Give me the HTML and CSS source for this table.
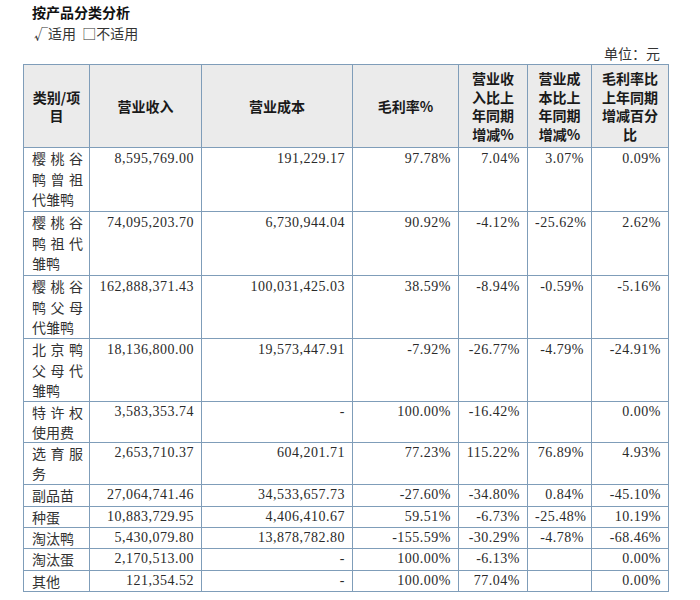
FILE: index.html
```html
<!DOCTYPE html>
<html lang="zh">
<head>
<meta charset="utf-8">
<link rel="stylesheet" href="styles.css">
</head>
<body>
<div class="page">
  <div class="title">按产品分类分析</div>
  <div class="opts">√适用&nbsp;&nbsp;□不适用</div>
  <div class="unit">单位：元</div>
  <table class="tbl">
    <colgroup>
      <col class="c1"><col class="c2"><col class="c3"><col class="c4"><col class="c5"><col class="c6"><col class="c7">
    </colgroup>
    <thead>
      <tr class="hr">
        <th>类别/项目</th>
        <th>营业收入</th>
        <th>营业成本</th>
        <th>毛利率%</th>
        <th>营业收入比上年同期增减%</th>
        <th>营业成本比上年同期增减%</th>
        <th>毛利率比上年同期增减百分比</th>
      </tr>
    </thead>
    <tbody>
      <tr class="h3a"><td class="name">樱桃谷鸭曾祖代雏鸭</td><td class="num">8,595,769.00</td><td class="num">191,229.17</td><td class="num">97.78%</td><td class="num">7.04%</td><td class="num">3.07%</td><td class="num">0.09%</td></tr>
      <tr class="h3a"><td class="name">樱桃谷鸭祖代雏鸭</td><td class="num">74,095,203.70</td><td class="num">6,730,944.04</td><td class="num">90.92%</td><td class="num">-4.12%</td><td class="num">-25.62%</td><td class="num">2.62%</td></tr>
      <tr class="h3b"><td class="name">樱桃谷鸭父母代雏鸭</td><td class="num">162,888,371.43</td><td class="num">100,031,425.03</td><td class="num">38.59%</td><td class="num">-8.94%</td><td class="num">-0.59%</td><td class="num">-5.16%</td></tr>
      <tr class="h3b"><td class="name">北京鸭父母代雏鸭</td><td class="num">18,136,800.00</td><td class="num">19,573,447.91</td><td class="num">-7.92%</td><td class="num">-26.77%</td><td class="num">-4.79%</td><td class="num">-24.91%</td></tr>
      <tr class="h2a"><td class="name">特许权使用费</td><td class="num">3,583,353.74</td><td class="num">-</td><td class="num">100.00%</td><td class="num">-16.42%</td><td class="num"></td><td class="num">0.00%</td></tr>
      <tr class="h2b"><td class="name">选育服务</td><td class="num">2,653,710.37</td><td class="num">604,201.71</td><td class="num">77.23%</td><td class="num">115.22%</td><td class="num">76.89%</td><td class="num">4.93%</td></tr>
      <tr class="h1b"><td class="name">副品苗</td><td class="num">27,064,741.46</td><td class="num">34,533,657.73</td><td class="num">-27.60%</td><td class="num">-34.80%</td><td class="num">0.84%</td><td class="num">-45.10%</td></tr>
      <tr class="h1a"><td class="name">种蛋</td><td class="num">10,883,729.95</td><td class="num">4,406,410.67</td><td class="num">59.51%</td><td class="num">-6.73%</td><td class="num">-25.48%</td><td class="num">10.19%</td></tr>
      <tr class="h1a"><td class="name">淘汰鸭</td><td class="num">5,430,079.80</td><td class="num">13,878,782.80</td><td class="num">-155.59%</td><td class="num">-30.29%</td><td class="num">-4.78%</td><td class="num">-68.46%</td></tr>
      <tr class="h1b"><td class="name">淘汰蛋</td><td class="num">2,170,513.00</td><td class="num">-</td><td class="num">100.00%</td><td class="num">-6.13%</td><td class="num"></td><td class="num">0.00%</td></tr>
      <tr class="h1a"><td class="name">其他</td><td class="num">121,354.52</td><td class="num">-</td><td class="num">100.00%</td><td class="num">77.04%</td><td class="num"></td><td class="num">0.00%</td></tr>
    </tbody>
  </table>
</div>
</body>
</html>
```

FILE: styles.css
```css
html, body {
  margin: 0;
  padding: 0;
  background: #ffffff;
}

.page {
  width: 700px;
  font-family: "Liberation Serif", "Noto Sans CJK SC", serif;
  color: #2a2a2a;
  font-size: 14px;
}

.title {
  font-family: "Noto Sans CJK SC", sans-serif;
  font-weight: bold;
  font-size: 14px;
  line-height: 20px;
  color: #111;
  margin: 2px 0 0 32px;
}

.opts {
  font-family: "Noto Sans CJK SC", sans-serif;
  font-size: 14px;
  line-height: 20px;
  color: #333;
  margin: 1px 0 0 34px;
}

.unit {
  font-family: "Noto Sans CJK SC", sans-serif;
  font-size: 14px;
  line-height: 20px;
  color: #333;
  text-align: right;
  padding-right: 40px;
}

.tbl {
  margin: 1px 0 0 23px;
  border-collapse: collapse;
  table-layout: fixed;
  width: 645px;
}

.c1 { width: 66px; }
.c2 { width: 112px; }
.c3 { width: 151px; }
.c4 { width: 106px; }
.c5 { width: 69px; }
.c6 { width: 64px; }
.c7 { width: 77px; }

.tbl th,
.tbl td {
  border: 1px solid #7f9db9;
  padding: 0 7px;
  box-sizing: border-box;
}

.tbl th {
  background: #ebebeb;
  font-family: "Noto Sans CJK SC", sans-serif;
  font-weight: bold;
  font-size: 14px;
  line-height: 18.5px;
  color: #1a1a1a;
  text-align: center;
  vertical-align: middle;
  height: 83px;
}

.tbl td {
  vertical-align: top;
  line-height: 20px;
  padding-top: 1px;
}

.tbl td.name {
  font-family: "Noto Sans CJK SC", sans-serif;
  text-align: justify;
  padding: 0 6px 0 8px;
  line-height: 20.5px;
  color: #333;
}

.tbl td.num {
  text-align: right;
  letter-spacing: 0.5px;
}

.h1a td, .h1b td, .h2a td, .h2b td { padding-top: 0; }
.h3a td { height: 64px; }
.h3b td { height: 63px; }
.h2a td { height: 41px; }
.h2b td { height: 42px; }
.h1a td { height: 21px; }
.h1b td { height: 22px; }
.h1a td.name, .h1b td.name { line-height: 20px; }
.h2a td.name, .h2b td.name { line-height: 20px; }
```
